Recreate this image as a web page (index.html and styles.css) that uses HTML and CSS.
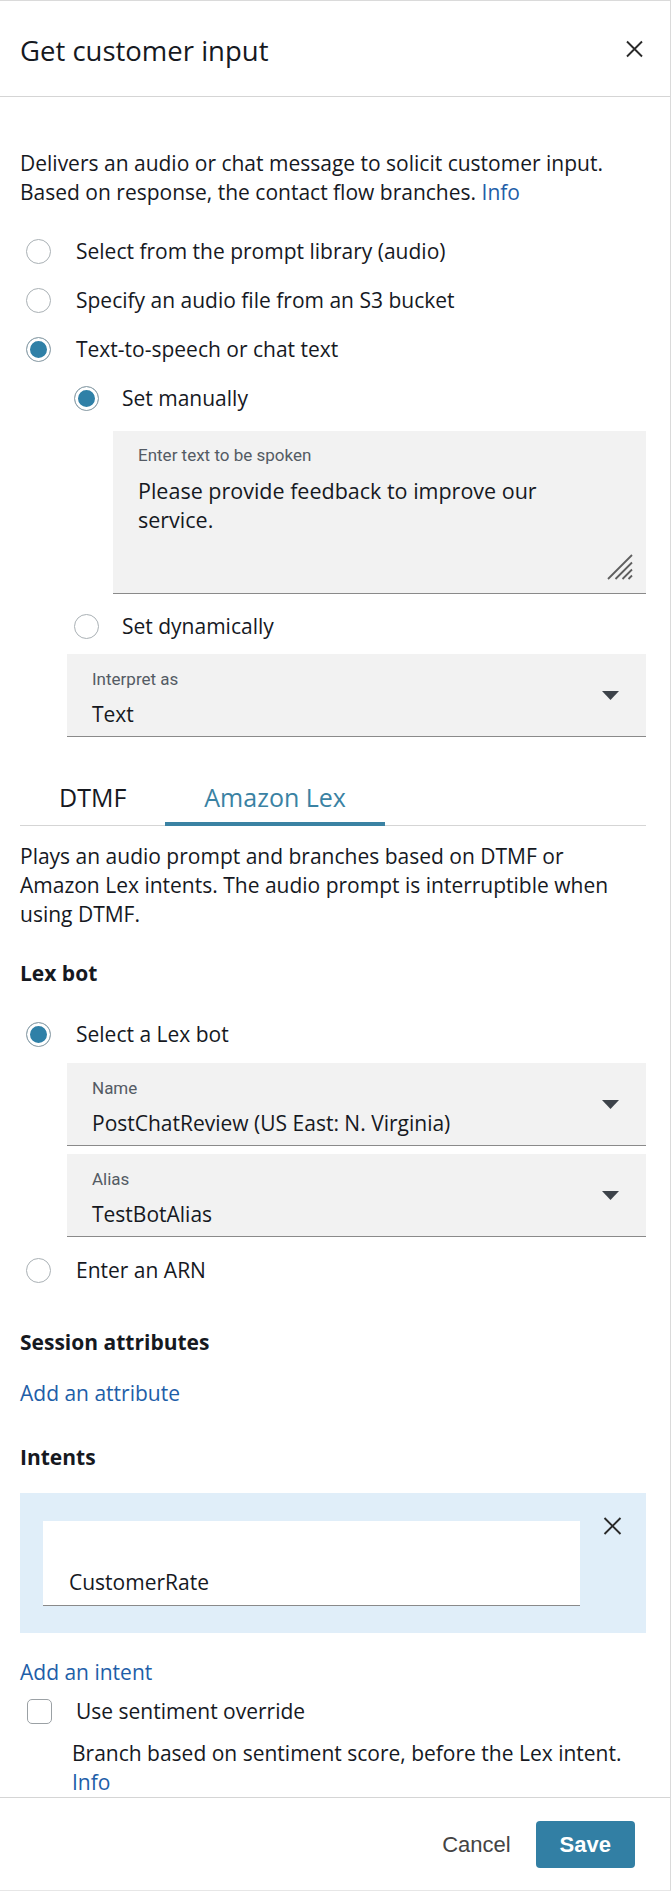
FILE: index.html
```html
<!DOCTYPE html>
<html lang="en">
<head>
<meta charset="utf-8">
<title>Get customer input</title>
<link rel="stylesheet" href="styles.css">
</head>
<body>
<div class="panel">
  <header class="panel-header">
    <h1 class="panel-title">Get customer input</h1>
    <button class="close-btn" type="button" aria-label="Close">
      <svg width="17" height="18" viewBox="0 0 17 18"><path d="M1 1.5L16 16.5M16 1.5L1 16.5" stroke="#2a2a2a" stroke-width="1.9" fill="none"/></svg>
    </button>
  </header>

  <div class="panel-body">
    <p class="intro"><span>Delivers an audio or chat message to solicit customer input.</span> <span>Based on response, the contact flow branches.</span> <a class="link" href="#">Info</a></p>

    <div class="radio-list">
      <div class="radio"><span class="radio-dot"></span><span>Select from the prompt library (audio)</span></div>
      <div class="radio"><span class="radio-dot"></span><span>Specify an audio file from an S3 bucket</span></div>
      <div class="radio is-checked"><span class="radio-dot"></span><span>Text-to-speech or chat text</span></div>
    </div>

    <div class="sub-options">
      <div class="radio is-checked"><span class="radio-dot"></span><span>Set manually</span></div>
      <div class="textarea">
        <div class="field-label">Enter text to be spoken</div>
        <div class="textarea-value">Please provide feedback to improve our service.</div>
        <svg class="grip" width="26" height="26" viewBox="0 0 26 26"><path d="M25 1L1 25M25 8.5L8.5 25M25 15.5L15.5 25M25 21.5L21.5 25" stroke="#5f5f5f" stroke-width="1.8" fill="none"/></svg>
      </div>
      <div class="radio"><span class="radio-dot"></span><span>Set dynamically</span></div>
    </div>

    <div class="select select-interpret">
      <div class="select-text">
        <div class="field-label">Interpret as</div>
        <div class="select-value">Text</div>
      </div>
      <svg class="caret" width="17" height="9" viewBox="0 0 17 9"><polygon points="0,0 17,0 8.5,9" fill="#3d434a"/></svg>
    </div>

    <div class="tabs">
      <div class="tab">DTMF</div>
      <div class="tab is-active">Amazon Lex</div>
    </div>

    <p class="tab-desc">Plays an audio prompt and branches based on DTMF or Amazon Lex intents. The audio prompt is interruptible when using DTMF.</p>

    <h2 class="section-title section-lexbot">Lex bot</h2>

    <div class="radio is-checked radio-lexbot"><span class="radio-dot"></span><span>Select a Lex bot</span></div>

    <div class="select select-name">
      <div class="select-text">
        <div class="field-label">Name</div>
        <div class="select-value">PostChatReview (US East: N. Virginia)</div>
      </div>
      <svg class="caret" width="17" height="9" viewBox="0 0 17 9"><polygon points="0,0 17,0 8.5,9" fill="#3d434a"/></svg>
    </div>
    <div class="select select-alias">
      <div class="select-text">
        <div class="field-label">Alias</div>
        <div class="select-value">TestBotAlias</div>
      </div>
      <svg class="caret" width="17" height="9" viewBox="0 0 17 9"><polygon points="0,0 17,0 8.5,9" fill="#3d434a"/></svg>
    </div>

    <div class="radio radio-arn"><span class="radio-dot"></span><span>Enter an ARN</span></div>

    <h2 class="section-title section-session">Session attributes</h2>
    <a class="link action-link action-attr" href="#">Add an attribute</a>

    <h2 class="section-title section-intents">Intents</h2>
    <div class="intent-box">
      <div class="intent-input">CustomerRate</div>
      <button class="intent-remove" type="button" aria-label="Remove intent">
        <svg width="19" height="18" viewBox="0 0 19 18"><path d="M1.5 1L17.5 17M17.5 1L1.5 17" stroke="#2a2a2a" stroke-width="1.9" fill="none"/></svg>
      </button>
    </div>
    <a class="link action-link action-intent" href="#">Add an intent</a>

    <div class="checkbox-row"><span class="checkbox"></span><span>Use sentiment override</span></div>
    <p class="checkbox-help">Branch based on sentiment score, before the Lex intent. <a class="link" href="#">Info</a></p>
  </div>

  <footer class="panel-footer">
    <button class="btn btn-cancel" type="button">Cancel</button>
    <button class="btn btn-save" type="button">Save</button>
  </footer>
</div>
</body>
</html>
```

FILE: styles.css
```css
* { box-sizing: border-box; }

html, body {
  margin: 0;
  padding: 0;
  background: #ffffff;
}

body {
  font-family: "Open Sans", "Noto Sans", sans-serif;
  font-size: 21px;
  line-height: 29px;
  font-weight: 400;
  color: #16191f;
}

.panel {
  width: 671px;
  border-top: 1px solid #dadada;
  border-right: 1px solid #dadada;
  border-bottom: 1px solid #e6e6e6;
  display: flex;
  flex-direction: column;
}

/* Header */
.panel-header {
  height: 96px;
  display: flex;
  align-items: center;
  justify-content: space-between;
  padding: 4px 27px 0 20px;
  border-bottom: 1px solid #d5d5d5;
}

.panel-title {
  margin: 0;
  font-size: 27.5px;
  font-weight: 400;
  line-height: 36px;
  color: #16191f;
}

.close-btn,
.intent-remove {
  border: 0;
  background: none;
  padding: 0;
  display: block;
  cursor: pointer;
}

.close-btn {
  width: 17px;
  height: 18px;
  margin-top: -4px;
}

/* Body */
.panel-body {
  padding: 52px 24px 0 20px;
}

.intro,
.tab-desc,
.checkbox-help {
  margin: 0;
}

.link {
  color: #1e5ea8;
  text-decoration: none;
}

/* Radios */
.radio-list {
  margin-top: 29.5px;
  display: flex;
  flex-direction: column;
  gap: 20px;
}

.radio {
  display: flex;
  align-items: center;
  gap: 25px;
  height: 29px;
  padding-left: 6px;
}

.radio-dot {
  flex: none;
  width: 25px;
  height: 25px;
  border-radius: 50%;
  border: 1px solid #aab1b5;
  background: #fff;
}

.radio.is-checked .radio-dot {
  background: #2f80a7;
  border-color: #9ea6ab;
  box-shadow: inset 0 0 0 3px #fff;
}

.sub-options {
  margin-top: 20px;
  padding-left: 48px;
  display: flex;
  flex-direction: column;
  gap: 18px;
}

.sub-options .radio {
  gap: 23px;
}

/* Text area */
.textarea {
  position: relative;
  margin-left: 45px;
  height: 163px;
  padding: 14px 60px 0 25px;
  background: #f2f2f2;
  border-bottom: 1px solid #8a8a8a;
}

.field-label {
  font-family: Roboto, "Liberation Sans", sans-serif;
  font-size: 17px;
  line-height: 20px;
  font-weight: 400;
  color: #545b64;
}

.textarea-value {
  margin-top: 11.5px;
  font-size: 21.5px;
}

.grip {
  position: absolute;
  right: 13px;
  bottom: 13px;
}

/* Selects */
.select {
  height: 83px;
  margin-left: 47px;
  display: flex;
  align-items: center;
  justify-content: space-between;
  padding: 0 27px 0 25px;
  background: #f2f2f2;
  border-bottom: 1px solid #8a8a8a;
}

.select-text {
  align-self: flex-start;
  padding-top: 15px;
}

.select-value {
  margin-top: 10.5px;
}

.caret {
  flex: none;
  display: block;
}

.select-interpret { margin-top: 13.5px; }
.select-name { margin-top: 14.5px; }
.select-alias { margin-top: 8px; }

/* Tabs */
.tabs {
  margin-top: 26px;
  display: flex;
  border-bottom: 1px solid #d5d5d5;
}

.tab {
  font-size: 25px;
  line-height: 34px;
  padding: 17px 39px 8px;
  border-bottom: 4px solid transparent;
  margin-bottom: -1px;
  color: #16191f;
}

.tab.is-active {
  color: #3a82a3;
  border-bottom-color: #3a82a3;
}

.tab-desc {
  margin-top: 15.5px;
}

/* Sections */
.section-title {
  margin: 0;
  font-size: 21px;
  line-height: 29px;
  font-weight: 700;
}

.section-lexbot { margin-top: 30px; }
.radio-lexbot { margin-top: 32px; }
.radio-arn { margin-top: 18.5px; }
.section-session { margin-top: 43px; }
.section-intents { margin-top: 35px; }

.action-link {
  display: block;
  width: max-content;
}

.action-attr { margin-top: 22px; }
.action-intent { margin-top: 24.5px; }

/* Intents */
.intent-box {
  margin-top: 21.5px;
  display: flex;
  justify-content: space-between;
  padding: 28px 24px 27px 23px;
  background: #e0eef9;
}

.intent-input {
  width: 537px;
  height: 85px;
  padding: 46.5px 26px 0;
  background: #ffffff;
  border-bottom: 1px solid #8a8a8a;
}

.intent-remove {
  width: 19px;
  height: 18px;
  margin-top: -4px;
}

/* Checkbox */
.checkbox-row {
  margin-top: 10px;
  height: 29px;
  display: flex;
  align-items: center;
  gap: 24px;
  padding-left: 7px;
}

.checkbox {
  flex: none;
  width: 25px;
  height: 25px;
  border: 1px solid #9ba1a5;
  border-radius: 5px;
  background: #fff;
}

.checkbox-help {
  margin-top: 13px;
  margin-left: 52px;
}

/* Footer */
.panel-footer {
  border-top: 1px solid #d5d5d5;
  padding: 23.5px 35px 22px;
  display: flex;
  justify-content: flex-end;
  align-items: center;
  gap: 25px;
}

.btn {
  font-family: "Liberation Sans", Arial, sans-serif;
  font-size: 22px;
  border: 0;
  cursor: pointer;
}

.btn-cancel {
  background: none;
  color: #444444;
  padding: 0;
  font-weight: 400;
}

.btn-save {
  height: 47px;
  padding: 0 24px;
  background: #327fa4;
  color: #ffffff;
  font-weight: 700;
  border-radius: 4px;
}
```
